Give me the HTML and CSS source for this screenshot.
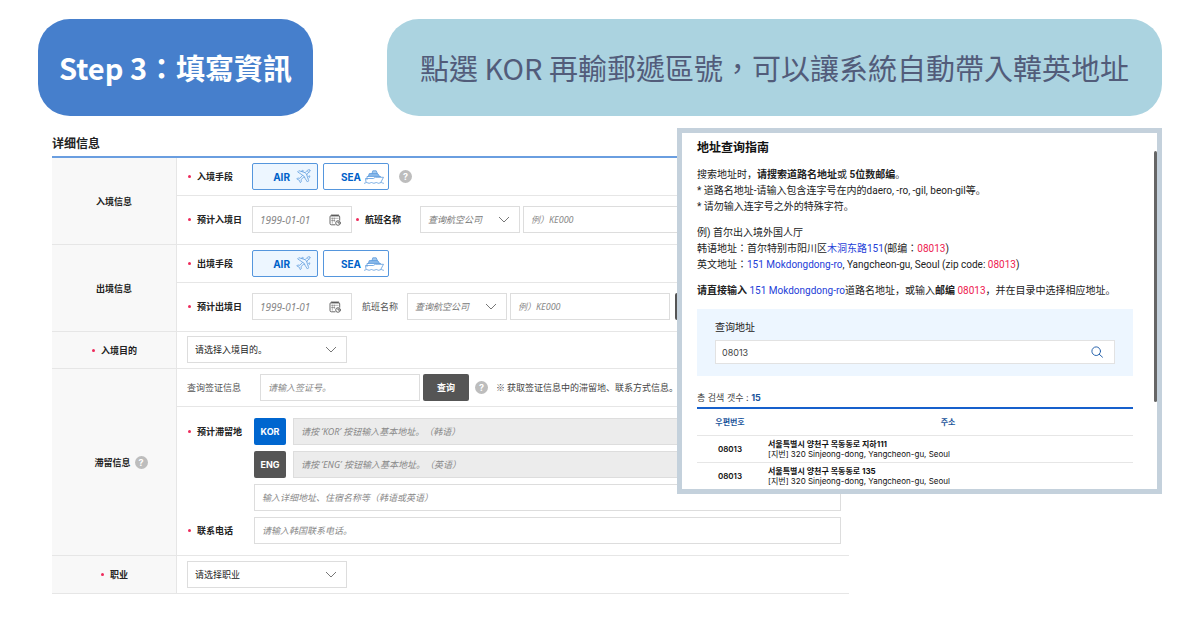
FILE: index.html
```
<!DOCTYPE html>
<html lang="zh-Hant">

<head>
    <meta charset="utf-8">
    <meta name="viewport" content="width=device-width, initial-scale=1">
    <link rel="stylesheet" href="styles.css">
    <title>Step 3：填寫資訊</title>
</head>

<body>

    <!-- icons used more than once -->
    <svg class="sprite" aria-hidden="true">
        <symbol id="plane" viewBox="0 0 16 16">
            <path d="M14.8 1.2c-.8-.8-2-.4-2.800.4L9.700 3.900 3 1.800 1.700 3.100l5.400 3.500-3 3.300-2.300-.3-1 1 2.600 1.300 1.200 2.700 1-1-.2-2.400 3.200-2.900 3.600 5.600 1.300-1.300-2.200-6.800 2.300-2.200c.8-.8 1.900-1.700 1.200-2.400z" />
            <path d="M5.500 2.600 6.700 1.500l1.300.4-.9 1M13.300 8.300l1.100-1.200.4 1.400-1 1M7.300 6.600l2 2M9.700 3.900l2.400 2.500M12.200 2.200l1.700 1.700" />
        </symbol>
        <symbol id="ship" viewBox="0 0 20 14">
            <path class="fill" d="M8 3.500 8.800.8h3.400l1.200 2.700 2.400 3H4.300l1-3z" />
            <path d="M3 9.500V6.500h13.500M4.300 6.500l1-3h8.100l2.400 3M8 3.500 8.800.8h3.400l1.200 2.700M5.300 5h9.200" />
            <path d="M2 12 1.500 8.500h7.800l2-1.200h8.200L17 12" />
            <path d="M.3 13.300c1.200 0 1.200-.8 2.400-.8s1.200.8 2.400.8 1.200-.8 2.400-.8 1.200.8 2.400.8 1.200-.8 2.400-.8 1.200.8 2.400.8 1.200-.8 2.400-.8 1.200.8 2.400.8" />
        </symbol>
        <symbol id="calendar" viewBox="0 0 12 12">
            <path d="M6 10.800H2.400c-.9 0-1.400-.5-1.400-1.400V2.900c0-.9.500-1.400 1.400-1.400h6.900c.9 0 1.400.5 1.400 1.400v3.300M3 .5v2M5 .5v2M7 .5v2M9 .5v2" />
            <path class="thin" d="M3.300 4v5.200M5.300 4v3.500M2.500 4.300h6.700M2.500 6.500h3.300" />
            <circle cx="9" cy="9" r="2.300" />
            <path d="M9 7.800V9h1" />
        </symbol>
    </svg>

    <header class="top">
        <h1 class="step">Step 3：填寫資訊</h1>
        <p class="tip">點選 KOR 再輸郵遞區號，可以讓系統自動帶入韓英地址</p>
    </header>

    <main class="main">

        <form class="details" lang="zh-Hans">
            <h2>详细信息</h2>
            <table class="form-table">
                <tbody>
                    <tr>
                        <th rowspan="2" scope="rowgroup">入境信息</th>
                        <td>
                            <div class="line">
                                <span class="label required">入境手段</span>
                                <div class="choices">
                                    <button type="button" class="choice active">AIR <svg class="icon-plane"><use href="#plane" /></svg></button>
                                    <button type="button" class="choice">SEA <svg class="icon-ship"><use href="#ship" /></svg></button>
                                </div>
                                <button type="button" class="help">?</button>
                            </div>
                        </td>
                    </tr>
                    <tr class="tall">
                        <td>
                            <div class="line">
                                <label class="label required" for="in-date">预计入境日</label>
                                <div class="date">
                                    <input type="text" id="in-date" placeholder="1999-01-01">
                                    <svg class="icon-cal"><use href="#calendar" /></svg>
                                </div>
                                <label class="label required" for="in-airline">航班名称</label>
                                <select class="field airline" id="in-airline">
                                    <option>查询航空公司</option>
                                </select>
                                <input type="text" class="field medium" placeholder="例）KE000" aria-label="航班号">
                            </div>
                        </td>
                    </tr>
                </tbody>
                <tbody>
                    <tr>
                        <th rowspan="2" scope="rowgroup">出境信息</th>
                        <td>
                            <div class="line">
                                <span class="label required">出境手段</span>
                                <div class="choices">
                                    <button type="button" class="choice active">AIR <svg class="icon-plane"><use href="#plane" /></svg></button>
                                    <button type="button" class="choice">SEA <svg class="icon-ship"><use href="#ship" /></svg></button>
                                </div>
                            </div>
                        </td>
                    </tr>
                    <tr class="tall">
                        <td>
                            <div class="line">
                                <label class="label required" for="out-date">预计出境日</label>
                                <div class="date">
                                    <input type="text" id="out-date" placeholder="1999-01-01">
                                    <svg class="icon-cal"><use href="#calendar" /></svg>
                                </div>
                                <label class="label optional inner" for="out-airline">航班名称</label>
                                <select class="field airline" id="out-airline">
                                    <option>查询航空公司</option>
                                </select>
                                <input type="text" class="field medium" placeholder="例）KE000" aria-label="航班号">
                                <button type="button" class="dark">查询</button>
                            </div>
                        </td>
                    </tr>
                </tbody>
                <tbody>
                    <tr class="short">
                        <th scope="row"><label class="required" for="purpose">入境目的</label></th>
                        <td>
                            <select class="field medium" id="purpose">
                                <option>请选择入境目的。</option>
                            </select>
                        </td>
                    </tr>
                </tbody>
                <tbody>
                    <tr>
                        <th rowspan="2" scope="rowgroup">
                            <div class="with-help">滞留信息 <button type="button" class="help">?</button></div>
                        </th>
                        <td>
                            <div class="line visa">
                                <label class="label optional" for="visa">查询签证信息</label>
                                <input type="text" class="field medium" id="visa" placeholder="请输入签证号。">
                                <button type="button" class="dark">查询</button>
                                <button type="button" class="help">?</button>
                                <span class="note">※ 获取签证信息中的滞留地、联系方式信息。</span>
                            </div>
                        </td>
                    </tr>
                    <tr>
                        <td class="stay">
                            <label class="label required" for="addr-kor">预计滞留地</label>
                            <div class="address">
                                <button type="button" class="lang kor">KOR</button>
                                <input type="text" class="field" id="addr-kor" placeholder="请按 ‘KOR’ 按钮输入基本地址。（韩语）" disabled>
                            </div>
                            <div class="address">
                                <button type="button" class="lang">ENG</button>
                                <input type="text" class="field" placeholder="请按 ‘ENG’ 按钮输入基本地址。（英语）" aria-label="英语地址" disabled>
                            </div>
                            <input type="text" class="field detail" placeholder="输入详细地址、住宿名称等（韩语或英语）" aria-label="详细地址">
                            <label class="label required" for="phone">联系电话</label>
                            <input type="text" class="field" id="phone" placeholder="请输入韩国联系电话。">
                        </td>
                    </tr>
                </tbody>
                <tbody>
                    <tr>
                        <th scope="row"><label class="required" for="job">职业</label></th>
                        <td>
                            <select class="field medium" id="job">
                                <option>请选择职业</option>
                            </select>
                        </td>
                    </tr>
                </tbody>
            </table>
        </form>

        <!-- address search popup, lies over the form -->
        <section class="popup" lang="zh-Hans">
            <h2>地址查询指南</h2>
            <p>搜索地址时，<b>请搜索道路名地址</b>或 <b>5位数邮编</b>。<br>
                * 道路名地址-请输入包含连字号在内的daero, -ro, -gil, beon-gil等。<br>
                * 请勿输入连字号之外的特殊字符。</p>
            <p>例) 首尔出入境外国人厅<br>
                韩语地址<span class="colon" lang="zh-Hant">：</span>首尔特别市阳川区<span class="blue">木洞东路151</span>(邮编<span class="colon" lang="zh-Hant">：</span><span class="red">08013</span>)<br>
                英文地址<span class="colon" lang="zh-Hant">：</span><span class="blue">151 Mokdongdong-ro</span>, Yangcheon-gu, Seoul (zip code: <span class="red">08013</span>)</p>
            <p><b>请直接输入</b> <span class="blue">151 Mokdongdong-ro</span>道路名地址，或输入<b>邮编</b> <span class="red">08013</span>，并在目录中选择相应地址。</p>

            <div class="search">
                <label for="query">查询地址</label>
                <div class="search-box">
                    <input type="text" id="query" value="08013">
                    <button type="button" aria-label="查询">
                        <svg viewBox="0 0 12 12"><circle cx="5.200" cy="5.200" r="4.300" /><path d="M8.300 8.300 11.500 11.200" /></svg>
                    </button>
                </div>
            </div>

            <div class="count" lang="ko">총 검색 갯수 : <b>15</b></div>
            <table class="results" lang="ko">
                <thead>
                    <tr>
                        <th class="zip">우편번호</th>
                        <th>주소</th>
                    </tr>
                </thead>
                <tbody>
                    <tr>
                        <td class="zip">08013</td>
                        <td><b>서울특별시 양천구 목동동로 지하111</b><br>[지번] 320 Sinjeong-dong, Yangcheon-gu, Seoul</td>
                    </tr>
                    <tr>
                        <td class="zip">08013</td>
                        <td><b>서울특별시 양천구 목동동로 135</b><br>[지번] 320 Sinjeong-dong, Yangcheon-gu, Seoul</td>
                    </tr>
                </tbody>
            </table>
            <div class="scrollbar"></div>
        </section>

    </main>

</body>

</html>
```
FILE: styles.css
```
* {
    box-sizing: border-box;
}

body {
    margin: 0;
    padding: 19px 38px;
    background: #fff;
    color: #222;
    font-family: "Noto Sans CJK SC", sans-serif;
    font-size: 9px;
}

h1,
h2,
p {
    margin: 0;
}

button,
input,
select {
    margin: 0;
    font-family: inherit;
    font-size: inherit;
}

svg {
    fill: none;
    stroke: currentColor;
    stroke-linejoin: round;
    stroke-linecap: round;
}

.sprite {
    position: absolute;
    width: 0;
    height: 0;
}

/* header */

.top {
    display: flex;
    justify-content: space-between;
    gap: 40px;
    font-family: "Noto Sans CJK TC", sans-serif;
    font-size: 29px;
    line-height: 43px;
}

.step,
.tip {
    padding: 27px 21px;
    border-radius: 32px;
}

.step {
    background: #467fcc;
    color: #fff;
    font-size: inherit;
    font-weight: bold;
}

.tip {
    padding: 27px 33px;
    background: #abd3e0;
    color: #525c7a;
}

/* form */

.main {
    position: relative;
    padding: 18px 0 0 14px;
}

.details {
    width: 71.8%;
}

.details h2 {
    margin-bottom: 4px;
    font-size: 12px;
    font-weight: bold;
    line-height: 18px;
}

.form-table {
    width: 100%;
    border-top: 2px solid #6a9ee0;
    border-spacing: 0;
}

.form-table th {
    width: 125px;
    padding: 0;
    background: #f8f8f8;
    border-right: 1px solid #e6e6e6;
    border-bottom: 1px solid #e6e6e6;
    font-weight: bold;
}

.form-table td {
    padding: 5px 8px 5px 10px;
    border-bottom: 1px solid #e6e6e6;
    line-height: 0;
}

.form-table .tall td {
    padding-top: 10px;
    padding-bottom: 11px;
}

.form-table .short td {
    padding-top: 4px;
}

.line,
.choices,
.address,
.with-help {
    display: flex;
    align-items: center;
}

.line {
    gap: 3px;
    white-space: nowrap;
}

.choices {
    gap: 5px;
}

.with-help {
    justify-content: center;
    gap: 4px;
    padding-left: 14px;
}

.label {
    flex: none;
    width: 62px;
    font-weight: bold;
    line-height: 27px;
}

.required::before {
    content: "";
    display: inline-block;
    width: 3px;
    height: 3px;
    margin: 0 6px 2px 1px;
    border-radius: 50%;
    background: #ee2a5b;
}

.optional {
    color: #555;
    font-weight: normal;
}

.inner {
    width: auto;
    margin: 0 6px 0 7px;
}

.visa .optional {
    width: 70px;
}

.field,
.date {
    height: 27px;
    padding: 0 7px;
    border: 1px solid #ddd;
    border-radius: 0;
    background: #fff;
    color: #222;
    font-family: "Noto Sans", "Noto Sans CJK SC", sans-serif;
    text-spacing-trim: space-all;
}

.field:disabled {
    background: #ececec;
}

::placeholder {
    color: #888;
    font-style: italic;
    opacity: 1;
}

select.field {
    appearance: none;
    background: #fff url("data:image/svg+xml,%3Csvg xmlns='http://www.w3.org/2000/svg' width='12' height='7' fill='none' stroke='%23777'%3E%3Cpath d='M1 1l5 5 5-5'/%3E%3C/svg%3E") no-repeat right 9px center;
}

select.airline {
    width: 100px;
    color: #777;
    font-style: italic;
}

.medium {
    width: 160px;
}

.date {
    display: flex;
    align-items: center;
    justify-content: space-between;
    width: 100px;
    padding-right: 10px;
}

.date input {
    width: 60px;
    padding: 0;
    border: 0;
    font-size: 10px;
}

.icon-cal {
    width: 12px;
    height: 12px;
    color: #444;
}

.choice {
    display: flex;
    align-items: center;
    justify-content: flex-end;
    gap: 6px;
    width: 66px;
    height: 27px;
    padding: 0 6px 0 0;
    border: 1px solid #5596dd;
    border-radius: 2px;
    background: #fff;
    color: #0061c9;
    font-family: Inter, sans-serif;
    font-size: 10px;
    font-weight: bold;
}

.choice + .choice {
    gap: 3px;
    padding-right: 4px;
}

.choice.active {
    background: #edf6ff;
}

.icon-plane {
    width: 15px;
    height: 15px;
    color: #5c9bdd;
}

.icon-ship {
    width: 20px;
    height: 14px;
    color: #5c9bdd;
}

.icon-plane,
.icon-ship,
.icon-cal {
    stroke-width: 0.8;
}

.fill {
    fill: #a5cbf0;
    stroke: none;
}

.thin {
    stroke-width: 0.4;
}

.help {
    width: 13px;
    height: 13px;
    padding: 0;
    border: 0;
    border-radius: 50%;
    background: #bdbdbd;
    color: #fff;
    font-family: Inter, sans-serif;
    font-weight: bold;
    line-height: 13px;
}

.line .help {
    margin: 0 5px 0 3px;
}

.line .choices + .help {
    margin-left: 7px;
}

.dark,
.lang {
    height: 27px;
    padding: 0;
    border: 0;
    border-radius: 2px;
    background: #555;
    color: #fff;
    font-weight: bold;
}

.dark {
    width: 46px;
}

.medium + .dark {
    margin-left: 2px;
}

.visa .medium + .dark {
    margin-left: 0;
}

.note {
    color: #444;
    line-height: 14px;
}

.stay {
    display: grid;
    grid-template-columns: 62px 1fr;
    gap: 6px 5px;
}

.form-table .stay {
    padding-top: 11px;
    padding-bottom: 11px;
}

.address,
.detail {
    grid-column: 2;
}

.address {
    gap: 7px;
}

.address .field {
    flex: 1;
}

.lang {
    width: 32px;
    font-family: Inter, sans-serif;
}

.lang.kor {
    background: #0066cf;
}

/* popup */

.popup {
    position: absolute;
    top: 12px;
    right: 0;
    width: 43.15%;
    padding: 7px 24px 0 15px;
    border: 5px solid #c4d1dc;
    background: #fff;
    font-family: Roboto, "Noto Sans CJK SC", sans-serif;
    font-size: 10px;
    line-height: 16px;
}

.popup h2 {
    margin-bottom: 10px;
    color: #111;
    font-size: 12px;
    line-height: 17px;
}

.popup p {
    margin-bottom: 10px;
}

/* the full-width colon sits in the middle of its box */
.colon {
    font-family: "Noto Sans CJK TC", sans-serif;
    line-height: 1;
}

.blue {
    color: #2440d8;
}

.red {
    color: #ee1c50;
}

.search {
    padding: 11px 18px 12px;
    background: #edf6ff;
}

.search label {
    display: block;
    margin-bottom: 4px;
}

.search-box {
    display: flex;
    align-items: center;
    height: 24px;
    padding: 0 11px 0 6px;
    border: 1px solid #e2e2e2;
    background: #fff;
}

.search-box input {
    flex: 1;
    min-width: 0;
    padding: 0;
    border: 0;
    color: #444;
    font-family: Inter, sans-serif;
    font-size: 9px;
}

.search-box button {
    display: flex;
    padding: 0;
    border: 0;
    background: none;
    color: #2a65ad;
}

.search-box svg {
    width: 12px;
    height: 12px;
}

.count {
    margin: 14px 0 1px;
    color: #444;
    font-family: Inter, "Noto Sans CJK KR", sans-serif;
    font-size: 9px;
}

.count b {
    color: #1b559b;
}

.results {
    width: 100%;
    border-top: 2px solid #1660cc;
    border-spacing: 0;
    color: #111;
    font-family: Inter, "Noto Sans CJK KR", sans-serif;
    font-size: 8px;
    line-height: 10px;
}

.results th {
    height: 27px;
    padding: 0;
    border-bottom: 1px solid #e6e6e6;
    color: #1b559b;
}

.results td {
    padding: 3px 5px;
    border-bottom: 1px solid #e6e6e6;
}

.results tbody tr:last-child td {
    border-bottom: 0;
}

.results .zip {
    width: 66px;
    text-align: center;
}

.results td.zip {
    font-weight: 600;
}

.scrollbar {
    position: absolute;
    top: 18px;
    right: 0;
    width: 3px;
    height: 251px;
    border-radius: 2px;
    background: #666;
}
```
